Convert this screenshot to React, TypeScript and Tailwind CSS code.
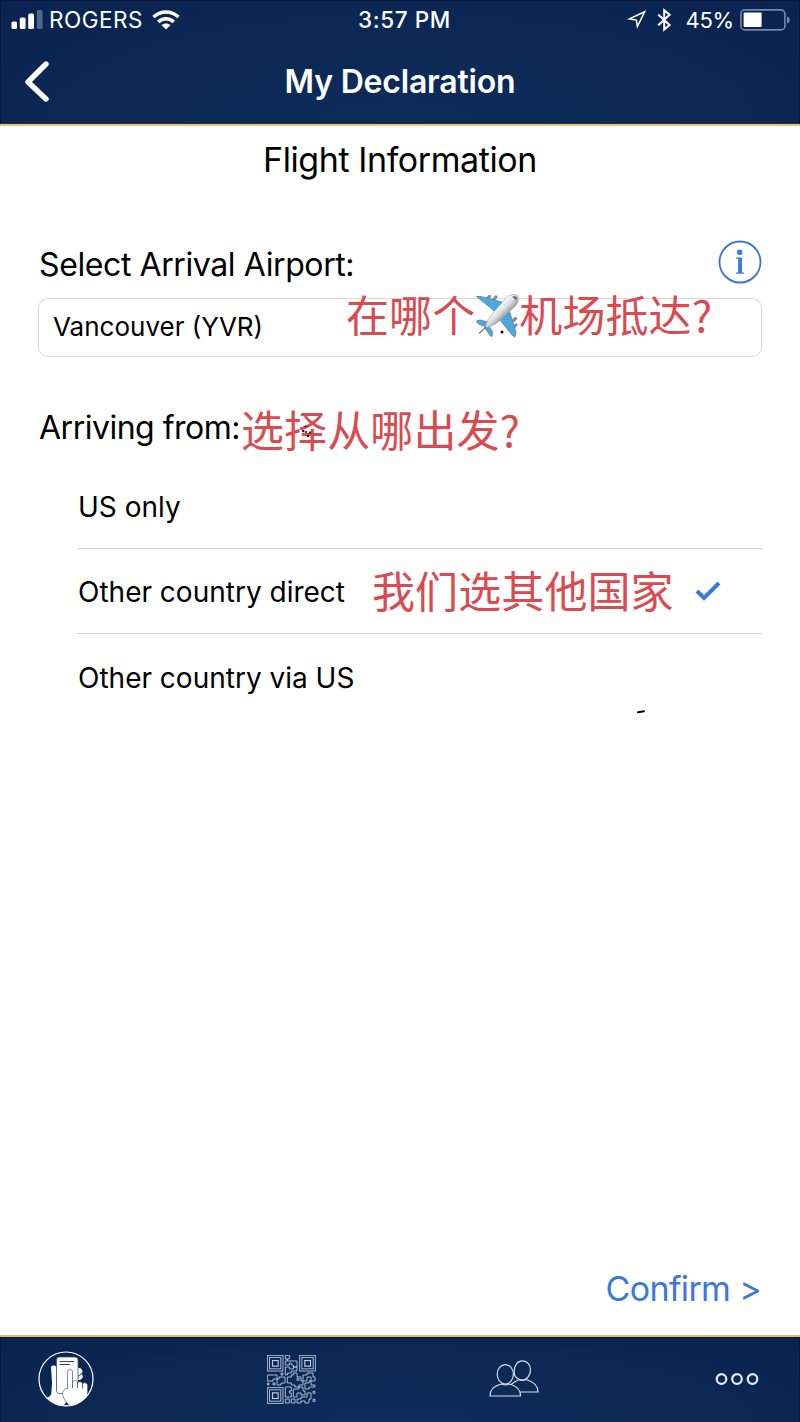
import React from 'react';

const SignalIcon = () => (
  <svg width="32" height="20" viewBox="0 0 32 20" fill="#fff">
    <rect x="0.5" y="11.5" width="5.5" height="7.5" rx="1.6" />
    <rect x="8.8" y="7.5" width="5.8" height="11.5" rx="1.6" />
    <rect x="17.2" y="3.5" width="5.8" height="15.5" rx="1.6" />
    <rect x="25.8" y="0" width="5.8" height="19" rx="1.6" fill="#50658c" />
  </svg>
);

const WifiIcon = () => (
  <svg width="28" height="20" viewBox="0 0 28 20" fill="none" stroke="#fff" strokeWidth="3.5">
    <path d="M1.5 7C8.6 0.2 19.4 0.2 26.5 7" />
    <path d="M6.2 11.9C10.6 7.8 17.4 7.8 21.8 11.9" />
    <path d="M14 19.6L9.4 15.1C12.1 12.8 15.9 12.8 18.6 15.1Z" fill="#fff" stroke="none" />
  </svg>
);

const LocationIcon = () => (
  <svg width="20" height="20" viewBox="0 0 20 20" fill="none" stroke="#fff" strokeWidth="1.5">
    <path d="M17.6 1.8L2.5 8.9L9.4 10.1L10.4 16.6Z" />
  </svg>
);

const BluetoothIcon = () => (
  <svg width="15" height="24" viewBox="0 0 15 24" fill="none" stroke="#fff" strokeWidth="2">
    <path d="M1.2 6.6L12.6 17L7.2 21.6V2.2L12.6 6.8L1.2 17.2" />
  </svg>
);

const BatteryIcon = () => (
  <svg width="51" height="22" viewBox="0 0 51 22" fill="none">
    <rect x="0.9" y="0.9" width="44" height="20" rx="4" stroke="#7788a8" strokeWidth="1.6" />
    <rect x="3.6" y="3.6" width="18" height="14.4" rx="1" fill="#fff" />
    <path d="M47 7.5C50.6 8.3 50.6 13.6 47 14.5Z" fill="#7788a8" />
  </svg>
);

const InfoIcon = () => (
  <svg width="44" height="44" viewBox="0 0 44 44">
    <circle cx="22" cy="22" r="20.5" fill="none" stroke="#3874d8" strokeWidth="1.8" />
    <circle cx="21.7" cy="12.3" r="2.8" fill="#3e7be3" />
    <path d="M18 17.4H24V32.4H26V33.8H18V32.4H20.1V18.8H18Z" fill="#3e7be3" />
  </svg>
);

const PlaneIcon = () => (
  <svg width="44" height="44" viewBox="0 0 44 44" className="relative top-[3px] shrink-0">
    <defs>
      <linearGradient id="body" x1="0.3" y1="0.3" x2="0.7" y2="0.7">
        <stop offset="0.1" stopColor="#fff" />
        <stop offset="0.5" stopColor="#dcdddf" />
        <stop offset="1" stopColor="#77797c" />
      </linearGradient>
    </defs>
    <g stroke="#8b8d90" strokeWidth="3.2" strokeLinecap="round">
      <path d="M12.5 4.500L14.500 2.500M19 5L21 3M38.500 26.500L40.500 24.500M38.500 33L41 31" />
    </g>
    <g fill="#4fa6dc" stroke="#397aa0" strokeWidth="0.7">
      <path d="M1.500 2.500L6 2.500L27 8L21 19L17 15Z" />
      <path d="M34 16L41 38L40 43L37.500 41.500L25 26Z" />
      <path d="M1.500 27L5 26L13 28L11 33L3.500 30Z" />
      <path d="M14 32L17.500 38L17 42.500L15 41.500L10 34Z" />
    </g>
    <path d="M10.500 33.500C11 28 13.500 24.500 17 20L31.500 3.500C35 0 42.500 -0.500 43 2.500C43.500 7 43 9 40 12.500L24 27C20 30.500 16 33 10.500 33.500Z" fill="url(#body)" stroke="#999" strokeWidth="0.6" />
    <path d="M37 2.800L41.500 6.500L42 3.500L40 2Z" fill="#6d7074" />
    <path d="M4 39.500L11 33" stroke="#777" strokeWidth="1.2" />
  </svg>
);

const HandPhoneIcon = () => (
  <svg width="56" height="56" viewBox="0 0 56 56" fill="none">
    <defs>
      <clipPath id="disc"><circle cx="28" cy="28" r="27" /></clipPath>
    </defs>
    <g clipPath="url(#disc)">
      <path d="M13 16C14 14 17 14 18.5 16V40H31V56H8V47C12 46 13.5 44 13.5 40L14 32Z" fill="#fff" />
      <path d="M39 17C43 16 46 20 43.5 22.5C46.500 26 44 29.500 39 29Z" fill="#fff" />
      <path d="M39 26L44 22.5" stroke="#17305c" strokeWidth="0.9" />
      <rect x="18.5" y="6" width="21.500" height="36.5" rx="3" fill="#fff" stroke="#3c527a" strokeWidth="0.8" />
      <path d="M21.5 10.500H36M21.5 13.500H32" stroke="#17305c" strokeWidth="0.9" />
      <path d="M29.500 38V21C29.500 17.500 34.500 17.500 34.500 21V31C36 28.500 39 29 39.500 32C41 30 44 30.500 44.500 33C46 31 49.500 31.500 49.500 35V56H31L27 49C23 44 24 39 29.500 37Z" fill="#fff" stroke="#5b6d90" strokeWidth="0.8" />
      <path d="M34.500 31V37M39.500 32V37M44.500 33V37.500" stroke="#17305c" strokeWidth="0.7" />
      <path d="M28.500 51L31 54H26Z" fill="#0c2854" />
    </g>
    <circle cx="28" cy="28" r="27" stroke="#fff" strokeWidth="1.2" />
  </svg>
);

const QrIcon = () => (
  <svg width="49" height="49" viewBox="0 0 147 147" fill="none" stroke="#c3cee2" strokeWidth="2.6">
    {[[1, 1], [98, 1], [1, 98]].map(([x, y]) => (
      <g key={`${x}-${y}`} transform={`translate(${x} ${y})`}>
        <rect width="47" height="47" />
        <rect x="6.5" y="6.5" width="34" height="34" />
        <rect x="15.5" y="15.5" width="17" height="17" strokeWidth="3.4" />
      </g>
    ))}
    <path d="M55 1H67V12H61V18H90V36H79V30H73V24H67V30H55V18H61V12H55Z" />
    <path d="M55 36H67V42H79V36H90V48H73V54H61V60H55Z" />
    <path d="M1 60H30V72H18V78H1ZM1 84H6V90H1ZM18 84H24V90H18Z" />
    <path d="M42 54H48V60H42ZM36 66H54V84H42V90H30V72H36Z" />
    <path d="M61 66H73V60H79V54H90V66H102V78H108V90H96V96H84V90H73V84H61Z" />
    <path d="M90 70H96V76H90Z" />
    <path d="M108 60H120V54H138V66H144V78H132V66H120V78H108Z" />
    <path d="M114 84H126V78H132V90H144V96H126V102H114Z" />
    <path d="M55 96H73V108H67V114H73V126H55Z" />
    <path d="M55 132H67V144H55ZM73 132H84V144H73Z" />
    <path d="M79 102H96V96H108V108H114V120H102V114H90V126H79Z" />
    <path d="M90 132H102V126H120V114H132V132H126V144H114V138H102V144H90Z" />
    <path d="M138 109H144V115H138ZM138 133H144V139H138Z" />
  </svg>
);

const PeopleIcon = () => (
  <svg width="50" height="38" viewBox="0 0 50 38" fill="none" stroke="#d5deed" strokeWidth="1.2">
    <ellipse cx="16.3" cy="14.3" rx="8.1" ry="9.7" />
    <path d="M1 36C1 29 6 25.5 12.5 24C14.5 25 18 25 20 24C27 25.5 31.5 29 31.5 36Z" />
    <path d="M25.5 15C24.3 6.5 28 0.8 33.5 0.8C38.500 0.8 41.5 5 41.5 10C41.5 15 38 20 33.5 20C30 20 26.5 17.5 25.5 15Z" />
    <path d="M22 24.5C25 22 27 21 30 19.8C32.5 20.7 35 20.5 37 19.5C44 21.5 49 25 49 32H31" />
  </svg>
);

const MoreIcon = () => (
  <svg width="44" height="14" viewBox="0 0 44 14" fill="none" stroke="#e3eaf5" strokeWidth="2.2">
    <circle cx="6.5" cy="7" r="4.8" />
    <circle cx="22" cy="7" r="4.8" />
    <circle cx="37.5" cy="7" r="4.8" />
  </svg>
);

const bar = "border-x border-[#0a1838] bg-[radial-gradient(ellipse_at_50%_100%,#0d2c5a_0%,#0c2955_50%,#0a2250_100%)]";
const note = "absolute flex items-center whitespace-nowrap font-['Noto_Sans_CJK_SC',sans-serif] text-[43px] leading-[44px] tracking-[0.1px] text-[#d94b50]";

const options = [
  { label: "US only", row: "h-[85px] border-b" },
  { label: "Other country direct", row: "h-[85px] border-b", selected: true },
  { label: "Other country via US", row: "h-[85px]" }
];

const App: React.FC = () => {
  return (
    <div className="flex flex-col w-[800px] h-[1422px] overflow-hidden bg-white text-black font-[Inter,sans-serif]">
      <header className={`h-[124px] shrink-0 border-y border-b-[#2a2a38] text-white ${bar}`}>
        <div className="grid grid-cols-3 items-center h-[38px]">
          <div className="flex items-center pl-[10px]">
            <SignalIcon />
            <span className="ml-[6px] mr-[9px] text-[22.5px] tracking-[0.5px]">ROGERS</span>
            <WifiIcon />
          </div>
          <span className="pl-[9px] text-center text-[22.5px] font-medium tracking-[0.6px]">3:57 PM</span>
          <div className="flex items-center justify-end pr-[8px]">
            <LocationIcon />
            <span className="ml-[10px] mr-[13px]"><BluetoothIcon /></span>
            <span className="mr-[6px] text-[22px] tracking-[-0.2px]">45%</span>
            <BatteryIcon />
          </div>
        </div>
        <div className="grid grid-cols-[80px_1fr_80px] items-center h-[85px]">
          <svg width="28" height="42" viewBox="0 0 28 42" className="ml-[21px]" fill="none" stroke="#fff" strokeWidth="5.4" strokeLinecap="round" strokeLinejoin="round">
            <path d="M24 3L6 21L24 38" />
          </svg>
          <h1 className="text-center text-[32px] font-semibold tracking-[-0.2px]">My Declaration</h1>
        </div>
      </header>

      <main className="relative flex flex-col flex-1 border-y-2 border-t-[#edc57c] border-b-[#d9bd79]">
        <h2 className="mt-[10px] h-[48px] text-center text-[34px] leading-[48px] tracking-[-0.42px]">Flight Information</h2>

        <div className="flex items-center justify-between mt-[56px] pl-[39px] pr-[38px] h-[44px]">
          <span className="pt-[5px] text-[32px] tracking-[-0.4px]">Select Arrival Airport:</span>
          <InfoIcon />
        </div>
        <div className="flex items-center mt-[14px] mx-[38px] h-[59px] pl-[14px] pb-[2px] border border-[#d9d9d9] rounded-[10px] text-[26px]">
          <span>Vancouver (YVR)</span>
        </div>

        <div className="mt-[47px] ml-[39px] h-[48px] text-[32px] leading-[48px] tracking-[-0.5px]">Arriving from:</div>
        <ul className="mt-[12px] ml-[77px] mr-[38px]">
          {options.map((option) => (
            <li key={option.label} className={`flex items-center justify-between pl-px pr-[41px] border-[#d2d2d2] text-[28px] ${option.row}`}>
              <span className="pt-[2px]">{option.label}</span>
              {option.selected && (
                <svg width="26" height="20" viewBox="0 0 26 20" fill="none" stroke="#3a77e2" strokeWidth="4">
                  <path d="M2 10L9 17L24 2" />
                </svg>
              )}
            </li>
          ))}
        </ul>

        <button className="mt-auto mb-[22px] mr-[39px] h-[48px] self-end text-[34px] leading-[48px] tracking-[-0.65px] text-[#3a78e0]">Confirm &gt;</button>

        {/* notes laid on top of the form */}
        <div className={`${note} left-[346px] top-[165px]`}>
          <span>在哪个</span>
          <PlaneIcon />
          <span>机场抵达?</span>
        </div>
        <div className={`${note} left-[241px] top-[280px]`}>选择从哪出发?</div>
        <div className={`${note} left-[372px] top-[441px]`}>我们选其他国家</div>

        {/* stray pen marks */}
        <svg width="4" height="4" className="absolute left-[500px] top-[204px]"><circle cx="2" cy="2" r="1.5" /></svg>
        <svg width="10" height="14" viewBox="0 0 10 14" className="absolute left-[302px] top-[299px]">
          <circle cx="1.3" cy="6" r="1.2" />
          <circle cx="3.5" cy="1.5" r="1" />
          <circle cx="4" cy="7" r="1" />
          <circle cx="8" cy="7.5" r="1.1" />
          <circle cx="6" cy="11" r="1.2" />
        </svg>
        <svg width="10" height="5" viewBox="0 0 10 5" className="absolute left-[636px] top-[583px]">
          <path d="M2 3.3L8 2.2" stroke="#000" strokeWidth="2" strokeLinecap="round" />
        </svg>
      </main>

      <footer className={`flex items-center h-[85px] shrink-0 pl-[37px] pr-[40px] pb-[2px] border-t border-t-[#221c22] ${bar}`}>
        <HandPhoneIcon />
        <span className="ml-[173px]"><QrIcon /></span>
        <span className="ml-[173px]"><PeopleIcon /></span>
        <span className="ml-auto"><MoreIcon /></span>
      </footer>
    </div>
  );
};

export default App;
